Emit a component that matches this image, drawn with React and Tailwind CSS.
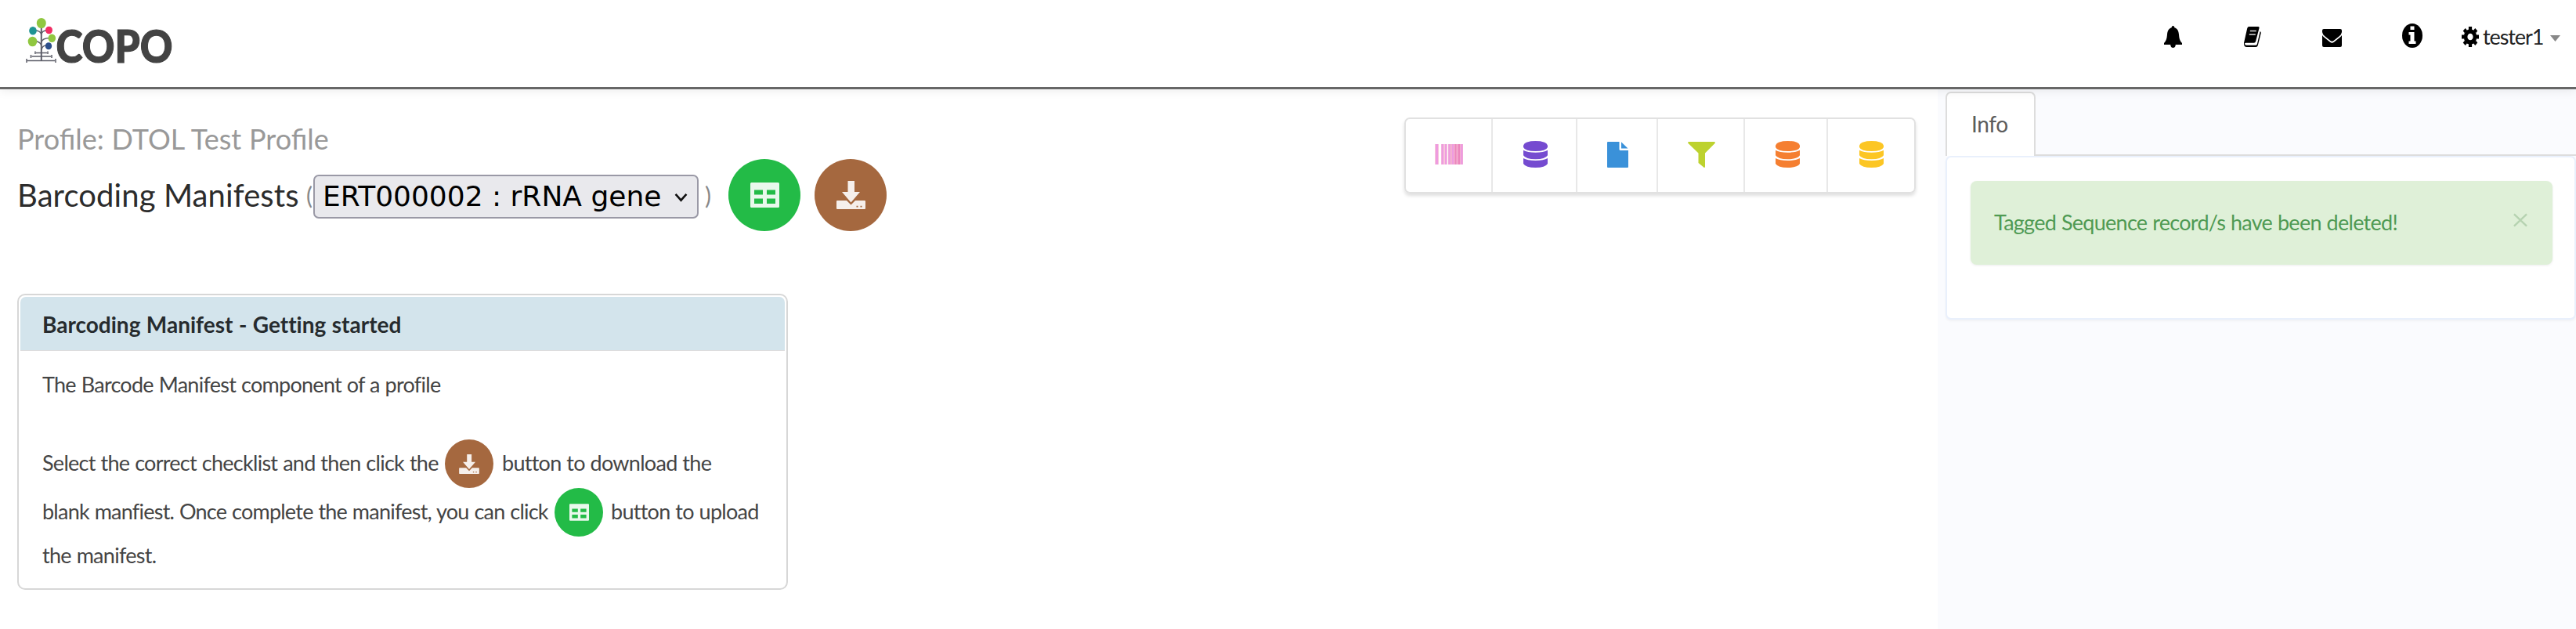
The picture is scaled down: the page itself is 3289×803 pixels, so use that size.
const DownloadIcon = ({ className }) => (
  <svg className={className} viewBox="0 0 37 36" fill="#f6efeb" aria-hidden="true">
    <path d="M14.500 0h8.500v14h7L18.500 27.500 7 14h7.500z" />
    <path fillRule="evenodd" d="M1 25h12l5.500 5.500 5.500-5.500h12q1 0 1 1v9q0 1-1 1H1q-1 0-1-1v-9q0-1 1-1zM25.500 31.800v1.800h2v-1.800zM30.500 31.800v1.800h2v-1.800z" />
  </svg>
);

const TableIcon = ({ className }) => (
  <svg className={className} viewBox="0 0 37 32" aria-hidden="true">
    <path
      fill="#e9f8ec"
      fillRule="evenodd"
      d="M1.500 0h34q1.500 0 1.500 1.500v29q0 1.500-1.500 1.500h-34q-1.500 0-1.500-1.500v-29q0-1.500 1.500-1.500zM5 9.500v6h11v-6zM21 9.500v6h11v-6zM5 20.500v6.500h11v-6.500zM21 20.500v6.500h11v-6.500z"
    />
  </svg>
);

const Logo = () => (
  <svg className="h-[90px] w-[260px] overflow-visible" viewBox="0 0 260 90" role="img">
    <g fill="none" stroke="#5c5d68" strokeWidth="1.500">
      <path d="M20.800 12V58" strokeWidth="2" />
      <path d="M20.800 24Q20 19 12 19M20.800 24Q21.500 19 28 19M20.800 38Q19 32 10 33M20.800 34Q22 28.500 32 28.500M20.800 44Q22 38 27 38" />
      <path d="M14 47.500H28M8.500 52H33M2.500 57.500H38" />
      <path d="M13 45.500v3.500M29 45.500v3.500M7.500 50v4M34 50v4M2 55v5M39 55v5" />
    </g>
    <ellipse cx="20.800" cy="9.500" rx="6" ry="6.600" fill="#90c740" />
    <ellipse cx="10" cy="19.300" rx="4.800" ry="5.200" fill="#1f9393" />
    <ellipse cx="30.500" cy="18.500" rx="4.500" ry="4.800" fill="#f02d63" />
    <ellipse cx="9.500" cy="33" rx="5.800" ry="6.300" fill="#90c740" />
    <ellipse cx="34.300" cy="28.800" rx="4.800" ry="5.200" fill="#90c740" />
    <ellipse cx="30" cy="38.800" rx="4.200" ry="4.500" fill="#2d4f8b" />
    <text x="39.500" y="59.500" fontFamily="Lato, sans-serif" fontWeight="900" fontSize="57.500" fill="#434343" stroke="#434343" strokeWidth="1.200" textLength="149" lengthAdjust="spacingAndGlyphs">COPO</text>
  </svg>
);

const BellIcon = () => (
  <svg className="w-[23px] h-[28px]" viewBox="0 0 23 28">
    <path d="M11.500 0q1.800 0 1.900 2.300C17 3.300 18.500 6.500 19 11c.5 5 .8 7.500 4 11v2H0v-2c3.200-3.500 3.500-6 4-11 .5-4.500 2-7.700 5.600-8.700Q9.700 0 11.500 0zM8.300 24h6.400v1q-.6 3-3.200 3t-3.200-3z" />
  </svg>
);

const BookIcon = () => (
  <svg className="w-[22px] h-[26px]" viewBox="0 0 22 26">
    <path d="M6.500 0H18q2 0 1.500 2L15 19q-.5 1.700-2.200 1.700H2.500Q1 20.700 1 22q.2 1.700 2.200 1.700h12q1.300 0 1.700-1.400L20.700 6q1.500.8 1 2.600L17.800 24q-.6 2-2.500 2H3.500Q.5 26 0 22.500q-.2-1.500.3-3L4.200 2.200Q4.700 0 6.500 0z" />
    <path d="M7.800 5.500h8M6.800 10h8" stroke="#ddd" strokeWidth="1.700" />
  </svg>
);

const EnvelopeIcon = () => (
  <svg className="w-[25px] h-[23px]" viewBox="0 0 25 23">
    <path d="M2 0h21q2 0 2 2v2q-.5 3-3 5l-7.500 6q-2 1.500-4 0L3 9Q.5 7 0 4V2q0-2 2-2z" />
    <path d="M0 8q1 1.500 2.500 2.800l7.500 6q2.500 1.800 5 0l7.500-6Q24 9.500 25 8v13q0 2-2 2H2q-2 0-2-2z" />
  </svg>
);

const InfoIcon = () => (
  <svg className="w-[26px] h-[31px]" viewBox="0 0 26 31">
    <ellipse cx="13" cy="15.500" rx="13" ry="15.500" />
    <path fill="#fff" d="M10.500 3.500h5V8h-5zM8.500 11h7v11.500h2V26h-9v-3.500h2v-8h-2z" />
  </svg>
);

const CogIcon = () => (
  <svg className="w-[22px] h-[26px]" viewBox="-13 -13 26 26" preserveAspectRatio="none">
    <circle r="7" fill="none" stroke="#000" strokeWidth="5.500" />
    <path d="M0-13V-9M0 13V9M-13 0H-9M13 0H9M-9.200-9.200L-6.500-6.500M9.200 9.200L6.500 6.500M-9.200 9.200L-6.500 6.500M9.200-9.200L6.500-6.500" stroke="#000" strokeWidth="5" />
  </svg>
);

const BarcodeIcon = () => (
  <svg className="w-[36px] h-[26px]" viewBox="0 0 36 26">
    <path fill="#f3b0d0" d="M17 0h19v26H17z" />
    <path fill="#f7c6da" d="M0 0h5v26H0zM8 0h8v26H8z" />
    <path fill="#ee9be0" d="M1 0h3v26H1zM8.500 0h2.500v26H8.500zM13 0h2v26h-2zM17.500 0h2v26h-2zM22 0h2v26h-2zM33 0h2.500v26H33z" />
    <path fill="#ec86bd" d="M25.500 0h2v26h-2zM29.500 0h2.500v26h-2.500z" />
  </svg>
);

const DatabaseIcon = ({ className }) => (
  <svg className={"w-[31px] h-[34px] " + className} viewBox="0 0 31 34" fill="currentColor">
    <path d="M0 5.500Q2 0 15.500 0T31 5.500V8q-2 5-15.500 5T0 8z" />
    <path d="M0 11.800q5 2.900 15.500 2.900T31 11.800v6.500q-3 5-15.500 5T0 18.300z" />
    <path d="M0 22q5 3 15.500 3T31 22v7q-3 5-15.500 5T0 29z" />
  </svg>
);

const FileIcon = () => (
  <svg className="w-[27px] h-[33px]" viewBox="0 0 27 33" fill="#3a91d9">
    <path d="M1 0h14.500v9.500q0 1.500 1.500 1.500h10v21q0 1-1 1H1q-1 0-1-1V1q0-1 1-1zM18 .3L26.500 8.500H18z" />
  </svg>
);

const FilterIcon = () => (
  <svg className="w-[35px] h-[33px]" viewBox="0 0 35 33" fill="#bdd22f">
    <path d="M1 0h33q1.500.5.500 2L22 14.500V32q-.5 1.500-1.500.8L13.500 27V14.500L.5 2Q-.5.500 1 0z" />
  </svg>
);

const tools = [
  ["w-[112px]", <BarcodeIcon />],
  ["w-[108px] pl-[3px]", <DatabaseIcon className="text-[#754bd0]" />],
  ["w-[104px] pl-[3px]", <FileIcon />],
  ["w-[112px] pl-[2px]", <FilterIcon />],
  ["w-[106px] pl-[4px]", <DatabaseIcon className="text-[#f57f31]" />],
  ["w-[111px] pl-[2px]", <DatabaseIcon className="text-[#fcc624]" />],
];

const Circle = ({ children, className }) => (
  <span className={"flex shrink-0 items-center justify-center rounded-full " + className}>{children}</span>
);

export default function App() {
  return (
    <div className="flex h-[803px] w-[3289px] flex-col overflow-hidden bg-white font-['Lato',sans-serif] text-[27px] tracking-[-0.720px] [word-spacing:0.600px] text-[#444]">
      <header className="z-10 flex h-[114px] shrink-0 items-start justify-between border-b-[3px] border-[#676767] bg-white pl-8 shadow-[0_2px_12px_rgba(0,0,0,0.08)]">
        <div className="pt-[20px] tracking-normal"><Logo /></div>
        <nav className="flex h-[94px] items-center pr-5">
          <span className="mr-[79px]"><BellIcon /></span>
          <span className="mr-[78px]"><BookIcon /></span>
          <span className="mr-[77px] pt-0.5"><EnvelopeIcon /></span>
          <span className="mr-[50px] pb-1"><InfoIcon /></span>
          <span className="mr-[5px]"><CogIcon /></span>
          <span className="w-[77px] whitespace-nowrap text-[27px] tracking-[-1.100px] text-[#222]">tester1</span>
          <svg className="ml-[9px] mt-1 h-[8px] w-[13px]" viewBox="0 0 13 8"><path fill="#888" d="M0 0h13L6.500 8z" /></svg>
        </nav>
      </header>

      <div className="flex grow">
        <main className="flex w-[2474px] items-start justify-between pl-[22px] pr-[28px]">
          <div>
            <h2 className="mt-[43px] h-10 text-[36px] leading-10 tracking-normal text-[#999]">Profile: DTOL Test Profile</h2>
            <div className="mt-1.5 flex h-[92px] items-center tracking-normal [word-spacing:0]">
              <h1 className="w-[369px] whitespace-nowrap text-[40px] leading-[46px] tracking-[0.100px] text-[#2c2c2c]">Barcoding Manifests</h1>
              <span className="w-[9px] text-[30px] leading-none text-[#888]">(</span>
              <div className="mt-1 flex h-[56px] w-[492px] items-center justify-between rounded-[7px] border-2 border-[#9a99a6] bg-[#e9e9ed] pl-[10px] pr-[12px] font-['DejaVu_Sans',sans-serif] text-[36px] text-black">
                <span className="whitespace-nowrap">ERT000002 : rRNA gene</span>
                <svg className="mt-0.5 h-[12px] w-[17px]" viewBox="0 0 18 13" fill="none" stroke="#111" strokeWidth="2.800"><path d="M1.500 2L9 10.500 16.500 2" /></svg>
              </div>
              <span className="ml-2 w-[30px] text-[30px] leading-none text-[#888]">)</span>
              <Circle className="size-[92px] bg-[#23bb47]"><TableIcon className="h-[32px] w-[37px]" /></Circle>
              <Circle className="ml-[18px] size-[92px] bg-[#a5683f]"><DownloadIcon className="h-[36px] w-[37px]" /></Circle>
            </div>

            <section className="mt-[80px] h-[378px] w-[984px] rounded-[10px] border-2 border-[#d7d7d7] p-[2px]">
              <h3 className="h-[69px] rounded-t-[7px] border-b border-[#ddd] bg-[#d3e4ec] pl-[28px] text-[28px] font-bold leading-[71px] tracking-[0.010px] text-[#262b2e]">Barcoding Manifest - Getting started</h3>
              <div className="whitespace-nowrap pl-[28px]">
                <p className="mt-[15px] leading-[55px]">The Barcode Manifest component of a profile</p>
                <p className="mt-[43px] flex h-[62px] items-center">
                  <span className="w-[514px] pb-px">Select the correct checklist and then click the</span>
                  <Circle className="size-[62px] bg-[#a5683f]"><DownloadIcon className="h-[25px] w-[26px]" /></Circle>
                  <span className="ml-[11px] pb-px">button to download the</span>
                </p>
                <p className="flex h-[62px] items-center">
                  <span className="w-[654px] pb-px tracking-[-0.760px]">blank manfiest. Once complete the manifest, you can click</span>
                  <Circle className="size-[62px] bg-[#23bb47]"><TableIcon className="h-[22px] w-[25px]" /></Circle>
                  <span className="ml-[10px] pb-px">button to upload</span>
                </p>
                <p className="leading-[48px]">the manifest.</p>
              </div>
            </section>
          </div>

          <div className="mt-[36px] flex h-[97px] w-[653px] divide-x-2 divide-[#e8e8e8] rounded-[7px] border-2 border-[#e1e1e1] shadow-[0_3px_4px_rgba(0,0,0,0.13)]">
            {tools.map(([width, icon], i) => (
              <span key={i} className={"flex items-center justify-center pb-[3px] " + width}>{icon}</span>
            ))}
          </div>
        </main>

        <aside className="w-[815px] bg-[#fafbfe] pl-[10px] pt-[3px]">
          <div className="flex h-[82px]">
            <div className="w-[115px] rounded-t-[7px] border-2 border-b-0 border-[#ddd] bg-white pl-[31px] text-[28px] leading-[78px] tracking-[-0.400px] text-[#5c5c5c]">Info</div>
            <div className="grow border-b-2 border-[#ddd]" />
          </div>
          <div className="h-[209px] w-[805px] rounded-[7px] border-2 border-[#e9f0fc] bg-white pl-[30px] pt-[30px] shadow-[0_2px_3px_rgba(0,0,0,0.04)]">
            <div className="flex h-[107px] w-[743px] items-center justify-between rounded-[8px] bg-[#dff0d8] pl-[30px] pr-[32px] text-[#4f9a53] shadow-[0_1px_3px_rgba(0,0,0,0.08)]">
              <span>Tagged Sequence record/s have been deleted!</span>
              <svg className="mb-[8px] h-[18px] w-[18px]" viewBox="0 0 19 18" stroke="#b6d3b1" strokeWidth="2.500"><path d="M1 1L18 17M18 1L1 17" /></svg>
            </div>
          </div>
        </aside>
      </div>
    </div>
  );
}
